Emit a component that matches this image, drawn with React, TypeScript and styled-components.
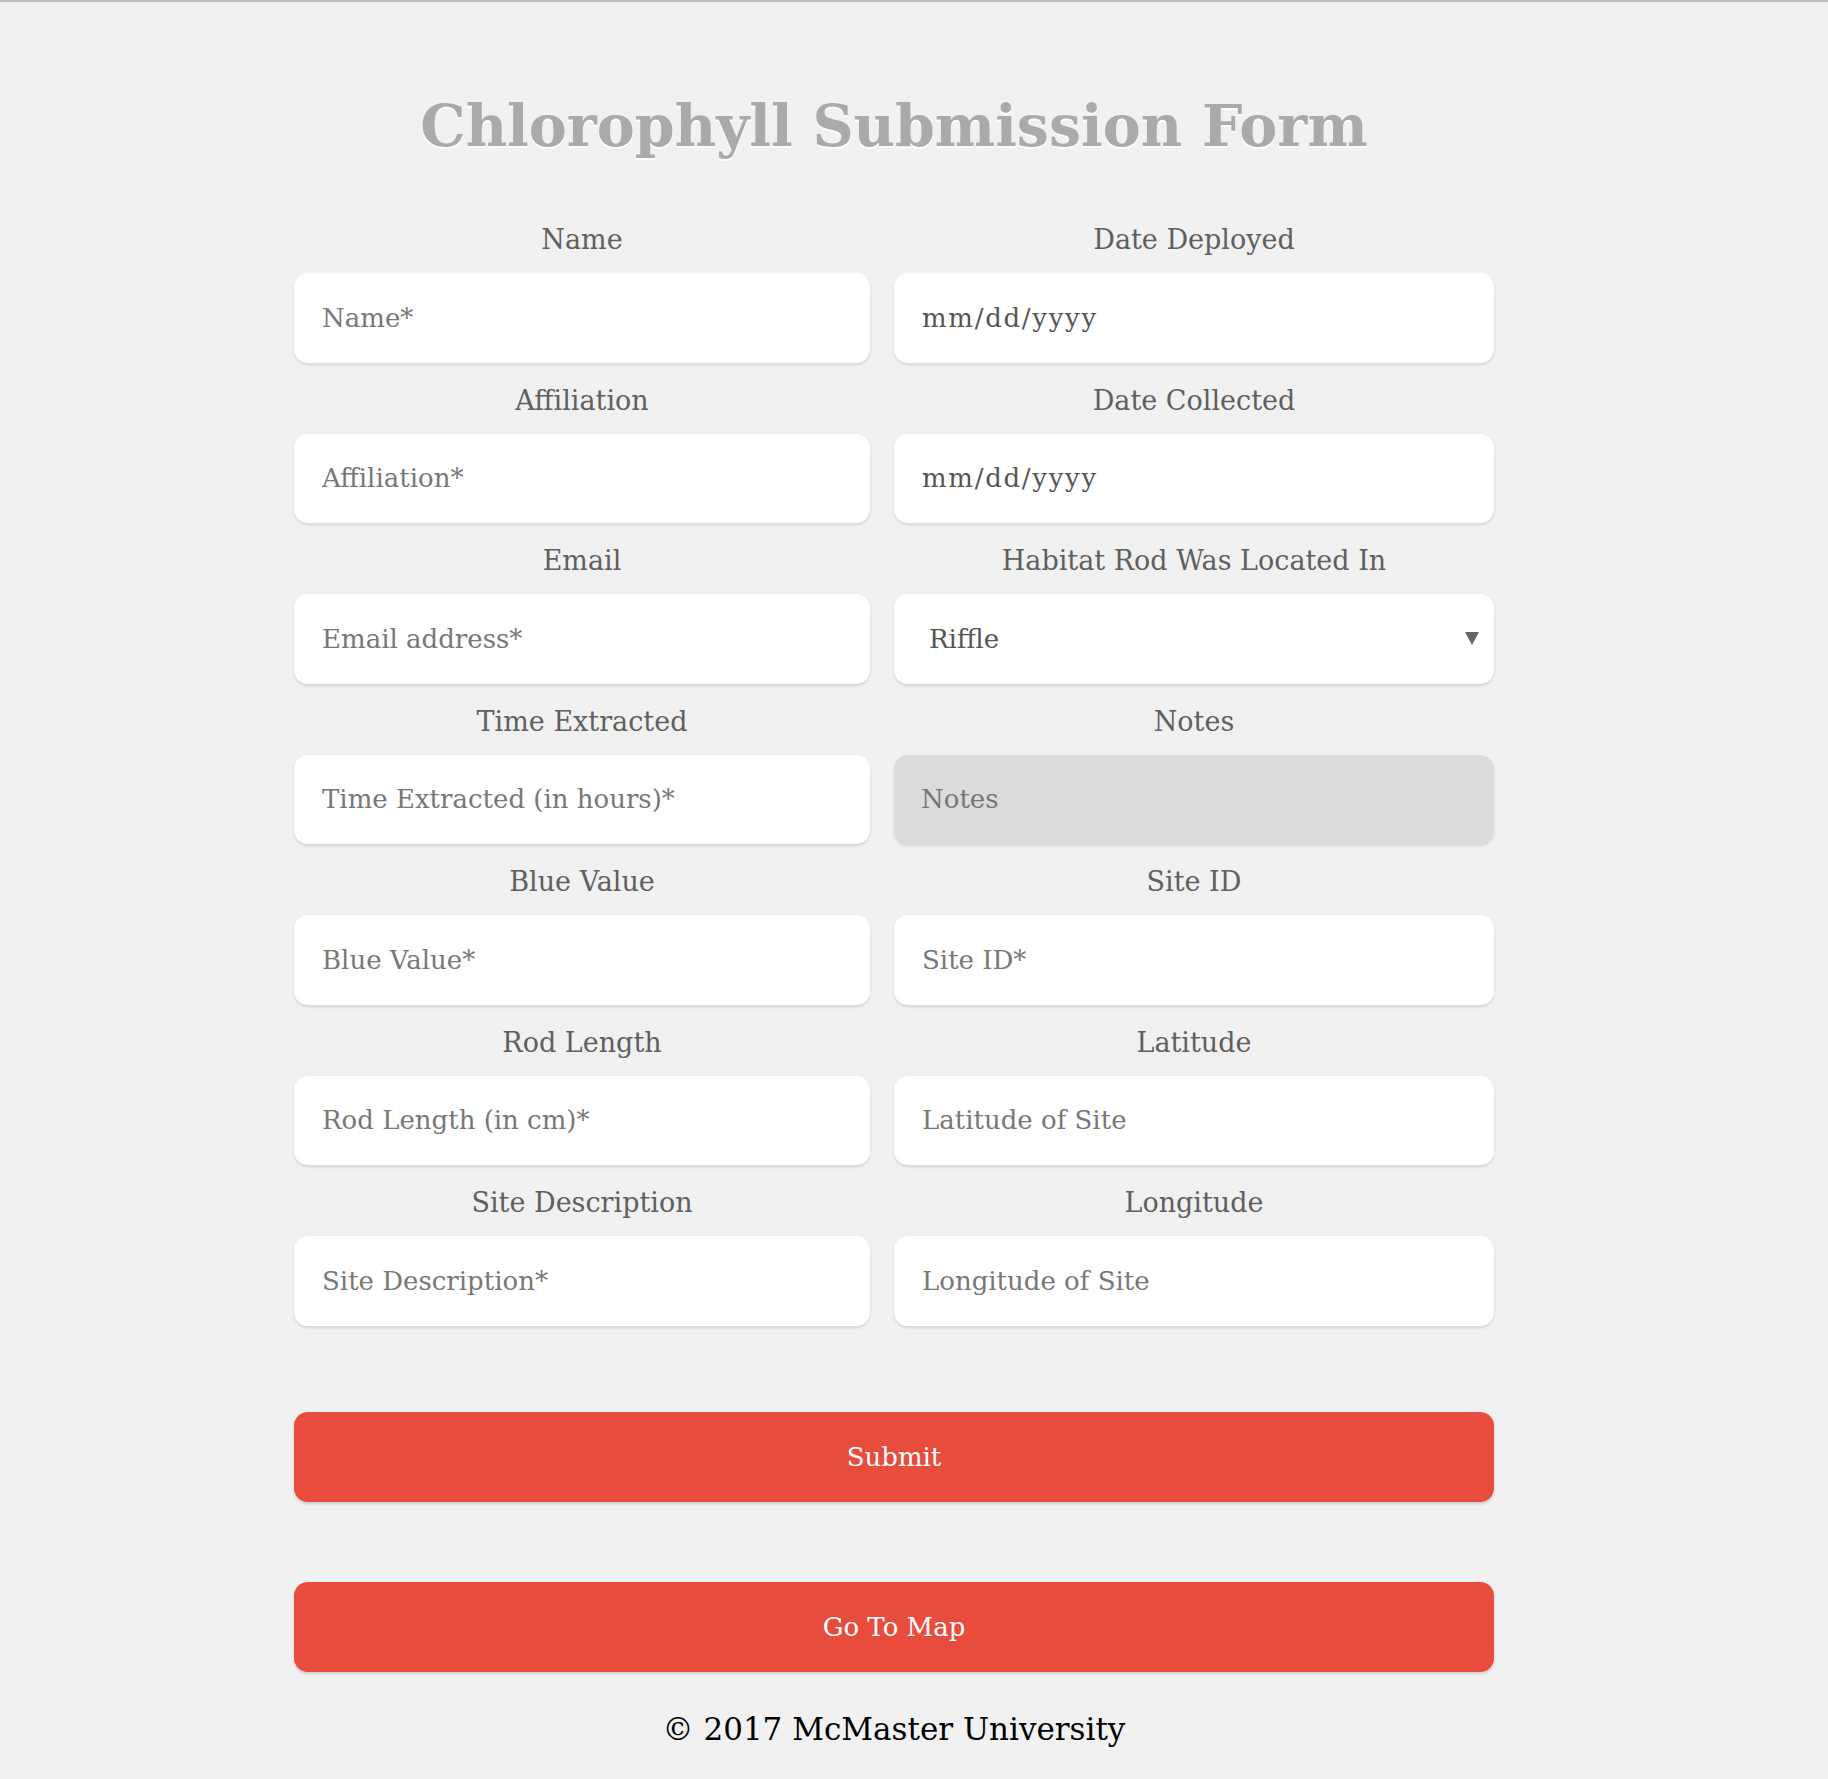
import React from "react";
import styled, { createGlobalStyle, css } from "styled-components";

const GlobalStyle = createGlobalStyle`
  html, body { margin: 0; padding: 0; background: #f1f1f1; }
  body {
    font-family: "DejaVu Serif", "Liberation Serif", serif;
    border-top: 2px solid #bdbdbd;
  }
  * { box-sizing: border-box; }
`;

const Page = styled.main`
  width: 1240px;
  margin: 0 auto;
  padding: 0 40px 29px 0;
`;

const Title = styled.h1`
  margin: 0 0 43px;
  padding-top: 91px;
  text-align: center;
  font: bold 57px/66px "DejaVu Serif", serif;
  color: #aaaaaa;
  text-shadow: 0 2px 0 #ffffff;
`;

const Fields = styled.div`
  display: grid;
  grid-template-columns: 576px 600px;
  column-gap: 24px;
`;

const Field = styled.div`
  display: flex;
  flex-direction: column;
`;

const Label = styled.label`
  display: block;
  padding: 23px 0 18px;
  line-height: 30px;
  font-size: 27px;
  text-align: center;
  color: #5f5f5f;
`;

const boxStyle = css`
  width: 100%;
  height: 89.5px;
  border: none;
  border-radius: 14px;
  background: #ffffff;
  box-shadow: 0 2px 3px rgba(0, 0, 0, 0.12);
  font: 26px/30px "DejaVu Serif", serif;
  color: #555555;
  outline: none;
  margin: 0;
`;

const TextInput = styled.input<{ $value?: boolean }>`
  ${boxStyle};
  padding: 0 28px;
  letter-spacing: ${(p) => (p.$value ? "1.7px" : "normal")};
  &::placeholder {
    color: ${(p) => (p.$value ? "#555555" : "#777777")};
    opacity: 1;
  }
`;

const NotesArea = styled.textarea`
  ${boxStyle};
  display: block;
  resize: none;
  background: #dcdcdc;
  padding: 29px 27px 0;
  &::placeholder {
    color: #777777;
    opacity: 1;
  }
`;

const SelectWrap = styled.div`
  position: relative;
`;

const Select = styled.select`
  ${boxStyle};
  display: block;
  appearance: none;
  -webkit-appearance: none;
  padding: 0 35px;
`;

const Arrow = styled.span`
  position: absolute;
  right: 15px;
  top: 50%;
  margin-top: -7px;
  width: 0;
  height: 0;
  border-left: 7px solid transparent;
  border-right: 7px solid transparent;
  border-top: 13px solid #666666;
  pointer-events: none;
`;

const Actions = styled.div`
  display: flex;
  flex-direction: column;
  gap: 80px;
  margin-top: 86px;
`;

const Button = styled.button`
  height: 90px;
  width: 100%;
  border: none;
  border-radius: 14px;
  background: #e74c3c;
  color: #ffffff;
  font: 26px "DejaVu Serif", serif;
  box-shadow: 0 2px 3px rgba(0, 0, 0, 0.15);
  cursor: pointer;
`;

const Footer = styled.footer`
  margin-top: 39px;
  text-align: center;
  font-size: 31px;
  color: #000000;
`;

type FieldDef =
  | { kind: "input"; label: string; placeholder: string; value?: boolean }
  | { kind: "select"; label: string; options: string[] }
  | { kind: "notes"; label: string; placeholder: string };

const fields: FieldDef[] = [
  { kind: "input", label: "Name", placeholder: "Name*" },
  { kind: "input", label: "Date Deployed", placeholder: "mm/dd/yyyy", value: true },
  { kind: "input", label: "Affiliation", placeholder: "Affiliation*" },
  { kind: "input", label: "Date Collected", placeholder: "mm/dd/yyyy", value: true },
  { kind: "input", label: "Email", placeholder: "Email address*" },
  { kind: "select", label: "Habitat Rod Was Located In", options: ["Riffle", "Pool", "Run"] },
  { kind: "input", label: "Time Extracted", placeholder: "Time Extracted (in hours)*" },
  { kind: "notes", label: "Notes", placeholder: "Notes" },
  { kind: "input", label: "Blue Value", placeholder: "Blue Value*" },
  { kind: "input", label: "Site ID", placeholder: "Site ID*" },
  { kind: "input", label: "Rod Length", placeholder: "Rod Length (in cm)*" },
  { kind: "input", label: "Latitude", placeholder: "Latitude of Site" },
  { kind: "input", label: "Site Description", placeholder: "Site Description*" },
  { kind: "input", label: "Longitude", placeholder: "Longitude of Site" },
];

function renderControl(f: FieldDef, id: string) {
  if (f.kind === "select") {
    return (
      <SelectWrap>
        <Select id={id} defaultValue={f.options[0]}>
          {f.options.map((o) => (
            <option key={o}>{o}</option>
          ))}
        </Select>
        <Arrow />
      </SelectWrap>
    );
  }
  if (f.kind === "notes") {
    return <NotesArea id={id} placeholder={f.placeholder} />;
  }
  return <TextInput id={id} type="text" placeholder={f.placeholder} $value={f.value} />;
}

export default function App() {
  return (
    <>
      <GlobalStyle />
      <Page>
        <Title>Chlorophyll Submission Form</Title>
        <form onSubmit={(e) => e.preventDefault()}>
          <Fields>
            {fields.map((f, i) => {
              const id = `field-${i}`;
              return (
                <Field key={id}>
                  <Label htmlFor={id}>{f.label}</Label>
                  {renderControl(f, id)}
                </Field>
              );
            })}
          </Fields>
          <Actions>
            <Button type="submit">Submit</Button>
            <Button type="button">Go To Map</Button>
          </Actions>
        </form>
        <Footer>© 2017 McMaster University</Footer>
      </Page>
    </>
  );
}
